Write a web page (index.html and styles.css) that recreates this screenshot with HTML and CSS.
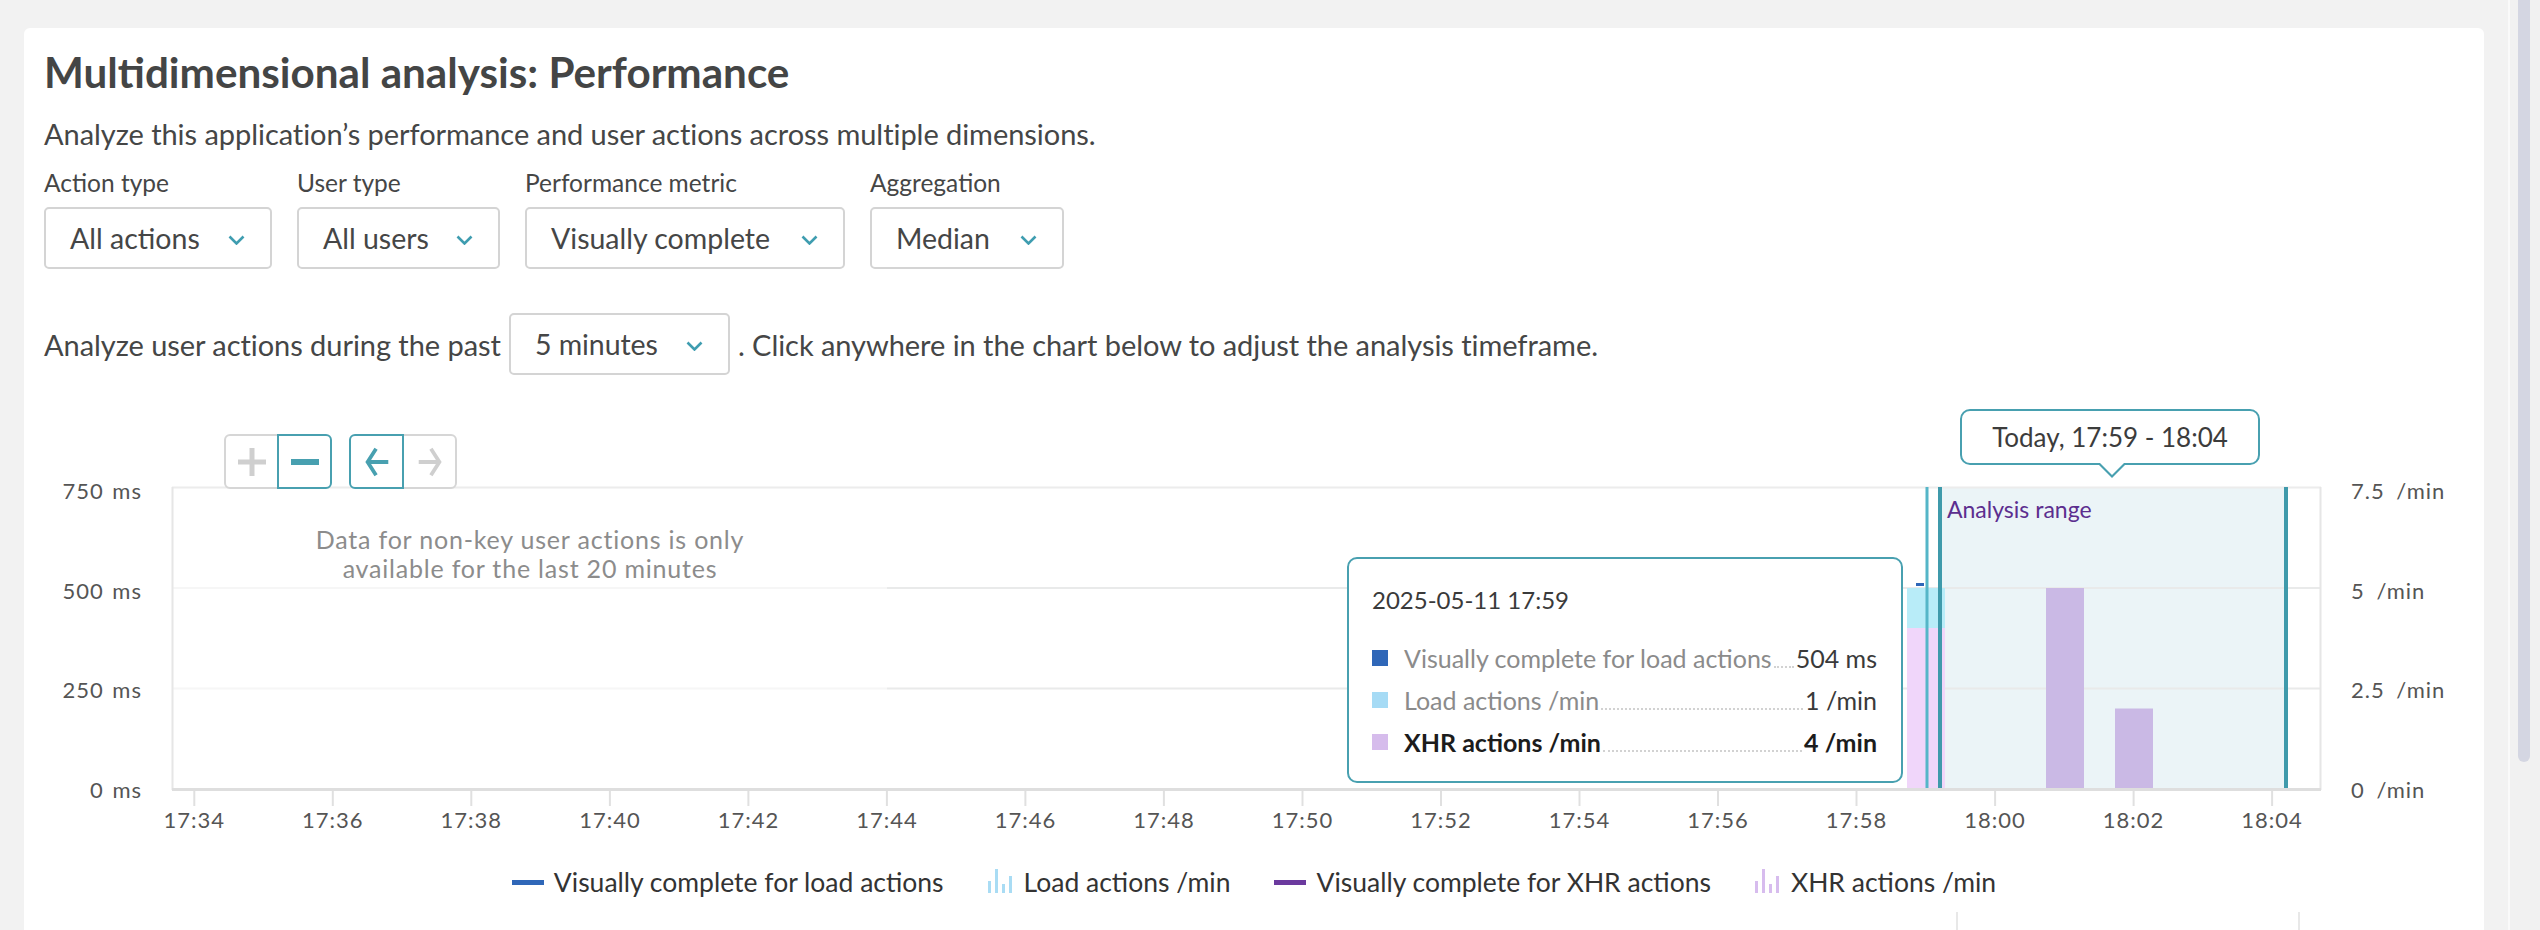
FILE: index.html
```html
<!DOCTYPE html>
<html lang="en">
<head>
<meta charset="utf-8">
<title>Multidimensional analysis: Performance</title>
<link rel="stylesheet" href="styles.css">
</head>
<body>
<div class="page">
  <main class="main">
    <section class="card">
      <h1 class="title">Multidimensional analysis: Performance</h1>
      <p class="desc">Analyze this application’s performance and user actions across multiple dimensions.</p>

      <div class="filters">
        <div class="field">
          <div class="field-label">Action type</div>
          <div class="select select-action"><span>All actions</span><svg class="chev" viewBox="0 0 17 10"><polyline points="1.5,1.5 8.5,8.5 15.5,1.5"/></svg></div>
        </div>
        <div class="field">
          <div class="field-label">User type</div>
          <div class="select select-user"><span>All users</span><svg class="chev" viewBox="0 0 17 10"><polyline points="1.5,1.5 8.5,8.5 15.5,1.5"/></svg></div>
        </div>
        <div class="field">
          <div class="field-label">Performance metric</div>
          <div class="select select-metric"><span>Visually complete</span><svg class="chev" viewBox="0 0 17 10"><polyline points="1.5,1.5 8.5,8.5 15.5,1.5"/></svg></div>
        </div>
        <div class="field">
          <div class="field-label">Aggregation</div>
          <div class="select select-agg"><span>Median</span><svg class="chev" viewBox="0 0 17 10"><polyline points="1.5,1.5 8.5,8.5 15.5,1.5"/></svg></div>
        </div>
      </div>

      <div class="period">
        <span>Analyze user actions during the past</span>
        <div class="select select-period"><span>5 minutes</span><svg class="chev" viewBox="0 0 17 10"><polyline points="1.5,1.5 8.5,8.5 15.5,1.5"/></svg></div>
        <span>. Click anywhere in the chart below to adjust the analysis timeframe.</span>
      </div>

      <div class="chart">
        <svg class="plot" width="2420" height="440" viewBox="44 400 2420 440">
          <!-- analysis range shading -->
          <rect x="1940" y="488" width="346" height="301" fill="#ebf4f7"/>
          <!-- grid lines -->
          <g stroke="#f6f6f6" stroke-width="2">
            <line x1="173" y1="588" x2="887" y2="588"/>
            <line x1="173" y1="688.5" x2="887" y2="688.5"/>
          </g>
          <g stroke="#e9eaea" stroke-width="2">
            <line x1="887" y1="588" x2="2320" y2="588"/>
            <line x1="887" y1="688.5" x2="2320" y2="688.5"/>
          </g>
          <!-- frame -->
          <line x1="172" y1="487.5" x2="2321" y2="487.5" stroke="#ececec" stroke-width="2"/>
          <line x1="2320.5" y1="487" x2="2320.5" y2="790" stroke="#e6e6e6" stroke-width="2"/>
          <line x1="172.5" y1="487" x2="172.5" y2="790" stroke="#e6e6e6" stroke-width="2"/>
          <!-- bars -->
          <rect x="1907" y="588" width="38" height="40" fill="#b8ecf8"/>
          <rect x="1907" y="628" width="38" height="161" fill="#f0d6fa"/>
          <rect x="2046" y="588" width="38" height="201" fill="#cab9e5"/>
          <rect x="2115" y="708.5" width="38" height="80.5" fill="#cab9e5"/>
          <rect x="1916" y="583" width="8" height="3" fill="#2f67b8"/>
          <!-- range lines -->
          <rect x="1925.5" y="487" width="3" height="302" fill="#55b6c8"/>
          <rect x="1938" y="487" width="4" height="302" fill="#3f9aab"/>
          <rect x="2284" y="487" width="4" height="302" fill="#3f9aab"/>
          <text class="range-label" x="1947" y="518">Analysis range</text>
          <!-- x axis -->
          <line x1="172" y1="789.5" x2="2321" y2="789.5" stroke="#dedede" stroke-width="3"/>
          <g stroke="#e0e0e0" stroke-width="2">
            <line x1="194.3" y1="791" x2="194.3" y2="806"/>
            <line x1="332.8" y1="791" x2="332.8" y2="806"/>
            <line x1="471.3" y1="791" x2="471.3" y2="806"/>
            <line x1="609.9" y1="791" x2="609.9" y2="806"/>
            <line x1="748.4" y1="791" x2="748.4" y2="806"/>
            <line x1="886.9" y1="791" x2="886.9" y2="806"/>
            <line x1="1025.4" y1="791" x2="1025.4" y2="806"/>
            <line x1="1163.9" y1="791" x2="1163.9" y2="806"/>
            <line x1="1302.5" y1="791" x2="1302.5" y2="806"/>
            <line x1="1441" y1="791" x2="1441" y2="806"/>
            <line x1="1579.5" y1="791" x2="1579.5" y2="806"/>
            <line x1="1718" y1="791" x2="1718" y2="806"/>
            <line x1="1856.5" y1="791" x2="1856.5" y2="806"/>
            <line x1="1995.1" y1="791" x2="1995.1" y2="806"/>
            <line x1="2133.6" y1="791" x2="2133.6" y2="806"/>
            <line x1="2272.1" y1="791" x2="2272.1" y2="806"/>
          </g>
          <g class="axis xaxis">
            <text x="194.3" y="828">17:34</text>
            <text x="332.8" y="828">17:36</text>
            <text x="471.3" y="828">17:38</text>
            <text x="609.9" y="828">17:40</text>
            <text x="748.4" y="828">17:42</text>
            <text x="886.9" y="828">17:44</text>
            <text x="1025.4" y="828">17:46</text>
            <text x="1163.9" y="828">17:48</text>
            <text x="1302.5" y="828">17:50</text>
            <text x="1441" y="828">17:52</text>
            <text x="1579.5" y="828">17:54</text>
            <text x="1718" y="828">17:56</text>
            <text x="1856.5" y="828">17:58</text>
            <text x="1995.1" y="828">18:00</text>
            <text x="2133.6" y="828">18:02</text>
            <text x="2272.1" y="828">18:04</text>
          </g>
          <g class="axis yleft">
            <text x="142" y="499">750 ms</text>
            <text x="142" y="599">500 ms</text>
            <text x="142" y="698">250 ms</text>
            <text x="142" y="798">0 ms</text>
          </g>
          <g class="axis yright">
            <text x="2351" y="499">7.5 /min</text>
            <text x="2351" y="599">5 /min</text>
            <text x="2351" y="698">2.5 /min</text>
            <text x="2351" y="798">0 /min</text>
          </g>
        </svg>

        <div class="zoom-controls">
          <div class="btn-group">
            <div class="zbtn"><svg viewBox="0 0 30 30"><path d="M15 1 V29 M1 15 H29" stroke="#cfcfcf" stroke-width="5" fill="none"/></svg></div>
            <div class="zbtn zbtn-active"><svg viewBox="0 0 30 30"><path d="M1 15 H29" stroke="#48a0b0" stroke-width="6" fill="none"/></svg></div>
          </div>
          <div class="btn-group">
            <div class="zbtn zbtn-active"><svg viewBox="0 0 30 34"><path d="M14 3 L5 17 L14 31 M5 17 H27" stroke="#48a0b0" stroke-width="4" fill="none" stroke-linejoin="miter"/></svg></div>
            <div class="zbtn"><svg viewBox="0 0 30 34"><path d="M16 3 L25 17 L16 31 M25 17 H3" stroke="#cfcfcf" stroke-width="4" fill="none"/></svg></div>
          </div>
        </div>

        <div class="nokey">Data for non-key user actions is only<br>available for the last 20 minutes</div>

        <div class="range-callout">Today, 17:59 - 18:04</div>

        <div class="hover-tip">
          <div class="tip-date">2025-05-11 17:59</div>
          <div class="tip-row tip-muted">
            <span class="tip-mark mark-vc"></span>
            <span class="tip-label">Visually complete for load actions</span>
            <span class="tip-dots"></span>
            <span class="tip-value">504 ms</span>
          </div>
          <div class="tip-row tip-muted">
            <span class="tip-mark mark-load"></span>
            <span class="tip-label">Load actions /min</span>
            <span class="tip-dots"></span>
            <span class="tip-value">1 /min</span>
          </div>
          <div class="tip-row tip-strong">
            <span class="tip-mark mark-xhr"></span>
            <span class="tip-label">XHR actions /min</span>
            <span class="tip-dots"></span>
            <span class="tip-value">4 /min</span>
          </div>
        </div>
      </div>

      <div class="legend">
        <div class="legend-item"><span class="lg-line lg-blue"></span><span>Visually complete for load actions</span></div>
        <div class="legend-item"><svg class="lg-bars" viewBox="0 0 26 26"><g fill="#a9dcf4"><rect x="0" y="14" width="3" height="12"/><rect x="7" y="2" width="3" height="24"/><rect x="14" y="17" width="3" height="9"/><rect x="21" y="9" width="3" height="17"/></g></svg><span>Load actions /min</span></div>
        <div class="legend-item"><span class="lg-line lg-purple"></span><span>Visually complete for XHR actions</span></div>
        <div class="legend-item"><svg class="lg-bars" viewBox="0 0 26 26"><g fill="#d7bcee"><rect x="0" y="14" width="3" height="12"/><rect x="7" y="2" width="3" height="24"/><rect x="14" y="17" width="3" height="9"/><rect x="21" y="9" width="3" height="17"/></g></svg><span>XHR actions /min</span></div>
      </div>

      <div class="below">
        <div></div><div class="vline"></div><div></div><div class="vline"></div>
      </div>
    </section>
  </main>
  <div class="scrollbar"><div class="thumb"></div></div>
</div>
</body>
</html>
```

FILE: styles.css
```css
* { box-sizing: border-box; }
html, body { margin: 0; padding: 0; }
body {
  background: #f2f2f2;
  font-family: Lato, "Open Sans", "DejaVu Sans", sans-serif;
  color: #454646;
  overflow: hidden;
  width: 2540px;
  height: 930px;
}
.page { display: flex; height: 930px; }
.main { width: 2508px; padding: 28px 24px 0; }
.card {
  background: #fff;
  border-radius: 6px;
  padding: 20px 20px 0;
  height: 960px;
}
.title {
  margin: 0;
  font-size: 42.2px;
  line-height: 48px;
  font-weight: 700;
  color: #444545;
}
.desc {
  margin: 20px 0 0;
  font-size: 29px;
  line-height: 36px;
  letter-spacing: -0.05px;
}
.filters { display: flex; gap: 25px; margin-top: 17px; }
.field-label {
  font-size: 24.5px;
  line-height: 28px;
  margin-bottom: 10px;
}
.select {
  height: 62px;
  border: 2px solid #d4d4d4;
  border-radius: 5px;
  display: flex;
  align-items: center;
  justify-content: space-between;
  padding: 0 25px 0 24px;
  font-size: 28.5px;
  color: #454646;
}
.select-action { width: 228px; }
.select-user { width: 203px; }
.select-metric { width: 320px; }
.select-agg { width: 194px; }
.select-period { width: 221px; margin: 0 8px 0 8px; }
.chev { width: 17px; height: 10px; margin-top: 4px; flex: none; }
.chev polyline { fill: none; stroke: #3f9db0; stroke-width: 2.6; }

.period {
  display: flex;
  align-items: center;
  margin-top: 44px;
  font-size: 29px;
  letter-spacing: -0.05px;
}

.chart { position: relative; height: 440px; margin-top: 25px; }
.plot { display: block; }
.axis text {
  font-family: Lato, "Open Sans", sans-serif;
  font-size: 22px;
  fill: #555;
  letter-spacing: 1px;
}
.xaxis text { text-anchor: middle; }
.yleft text { text-anchor: end; word-spacing: 2px; }
.yright text { word-spacing: 5px; }
.range-label {
  font-family: Lato, "Open Sans", sans-serif;
  font-size: 23px;
  fill: #5c2e8f;
}

.zoom-controls {
  position: absolute;
  left: 180px;
  top: 34px;
  display: flex;
  gap: 17px;
}
.btn-group { display: flex; }
.zbtn {
  width: 55px;
  height: 55px;
  border: 2px solid #d6d6d6;
  background: #fff;
  display: flex;
  align-items: center;
  justify-content: center;
  position: relative;
}
.zbtn + .zbtn { margin-left: -2px; }
.zbtn:first-child { border-radius: 6px 0 0 6px; }
.zbtn:last-child { border-radius: 0 6px 6px 0; }
.zbtn-active { border-color: #48a0b0; z-index: 1; }
.zbtn svg { width: 30px; height: 32px; }

.nokey {
  position: absolute;
  left: 226px;
  top: 125px;
  width: 520px;
  text-align: center;
  font-size: 25px;
  line-height: 29px;
  letter-spacing: 0.8px;
  color: #8c8c8c;
}

.range-callout {
  position: absolute;
  left: 1916px;
  top: 9px;
  width: 300px;
  height: 56px;
  border: 2px solid #48a0b0;
  border-radius: 10px;
  background: #fff;
  display: flex;
  align-items: center;
  justify-content: center;
  font-size: 26px;
  color: #3c3c3c;
}
.range-callout::before,
.range-callout::after {
  content: "";
  position: absolute;
  left: 50%;
  width: 0;
  height: 0;
  border-left: 15px solid transparent;
  border-right: 15px solid transparent;
}
.range-callout::before {
  top: 100%;
  margin-left: -13px;
  border-top: 15px solid #48a0b0;
}
.range-callout::after {
  top: calc(100% - 3px);
  margin-left: -13px;
  border-top: 15px solid #fff;
}

.hover-tip {
  position: absolute;
  left: 1303px;
  top: 157px;
  width: 556px;
  height: 226px;
  border: 2px solid #48a0b0;
  border-radius: 10px;
  background: #fff;
  padding: 26px 24px 0 23px;
  font-size: 25px;
}
.tip-date { line-height: 30px; color: #3a3a3a; font-size: 24px; }
.tip-date + .tip-row { margin-top: 22px; }
.tip-row {
  display: flex;
  align-items: baseline;
  height: 42px;
  line-height: 42px;
}
.tip-mark {
  width: 16px;
  height: 16px;
  margin-right: 16px;
  align-self: center;
  flex: none;
}
.mark-vc { background: #2f67b8; }
.mark-load { background: #a6dbf5; }
.mark-xhr { background: #d6bcec; }
.tip-dots {
  flex: 1;
  height: 1px;
  border-bottom: 2px dotted #d2d2d2;
  margin: 0 2px;
}
.tip-muted .tip-label { color: #8b8b8b; }
.tip-muted .tip-value { color: #3a3a3a; }
.tip-strong { font-weight: 700; color: #1c1c1c; }

.legend {
  display: flex;
  justify-content: center;
  gap: 44px;
  margin-top: 27px;
  height: 30px;
  font-size: 26.5px;
  line-height: 30px;
  color: #333;
}
.legend-item { display: flex; align-items: center; gap: 10px; }
.lg-line { width: 32px; height: 5px; }
.lg-blue { background: #2f67b8; }
.lg-purple { background: #6b3a9e; }
.lg-bars { width: 26px; height: 26px; margin-top: -4px; }

.below {
  display: grid;
  grid-template-columns: 1912px 2px 340px 2px;
  height: 20px;
  margin-top: 15px;
}
.vline { background: #e8e8e8; }

.scrollbar {
  width: 32px;
  height: 930px;
  background: #f1f1f1;
  border-left: 2px solid #fafafa;
  padding-left: 8px;
}
.thumb {
  width: 12px;
  height: 762px;
  background: #d4d6e2;
  border-radius: 0 0 6px 6px;
}
```
